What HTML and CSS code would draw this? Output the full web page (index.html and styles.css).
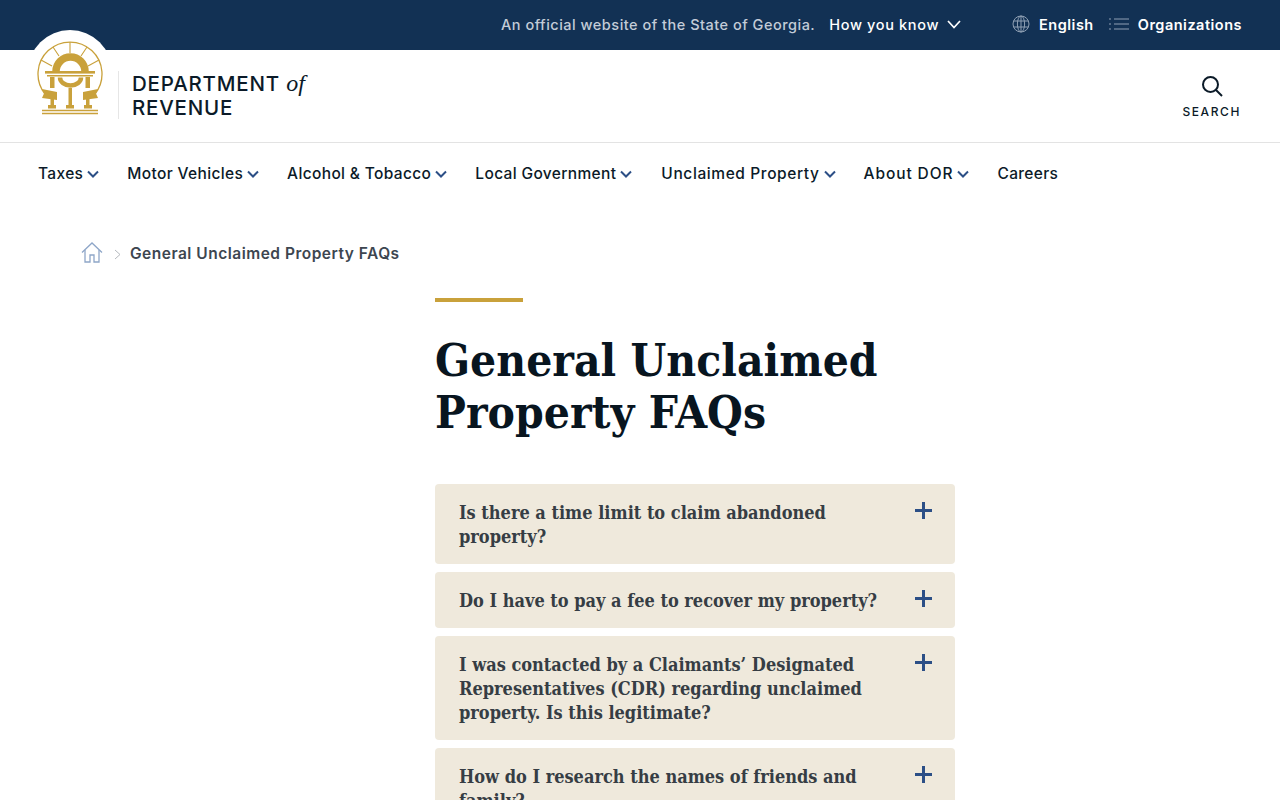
FILE: index.html
```html
<!DOCTYPE html>
<html lang="en">
<head>
  <meta charset="UTF-8">
  <meta name="viewport" content="width=device-width, initial-scale=1.0">
  <title>General Unclaimed Property FAQs</title>
  <link rel="stylesheet" href="styles.css">
</head>
<body>
  <div class="topbar">
    <span class="official">An official website of the State of Georgia.</span>
    <a class="how-you-know">How you know
      <svg width="14" height="9" viewBox="0 0 14 9"><path d="M1 1l6 6.5L13 1" fill="none" stroke="#fff" stroke-width="1.7"/></svg>
    </a>
    <a class="top-link lang">
      <svg width="18" height="18" viewBox="0 0 18 18" fill="none" stroke="#8fa0b4" stroke-width="1"><circle cx="9" cy="9" r="8"/><ellipse cx="9" cy="9" rx="3.6" ry="8"/><path d="M9 1v16M1.6 6h14.8M1.6 12h14.8"/></svg>
      English
    </a>
    <a class="top-link">
      <svg width="20" height="14" viewBox="0 0 20 14" fill="none" stroke="#8fa0b4" stroke-width="1"><path d="M5 2h15M5 7h15M5 12h15M0 2h2M0 7h2M0 12h2"/></svg>
      Organizations
    </a>
  </div>

  <header class="site-header">
    <a class="seal">
      <svg width="66" height="74" viewBox="37 41 66 74">
        <g fill="none" stroke="#c9a13b">
          <path d="M45 94A32 32 0 1 1 95 94" stroke-width="1.300"/>
          <path d="M70 42v11M53 47l6 9M87 47l-6 9M41 60l11 6M99 60l-11 6" stroke-width="1.100"/>
          <path d="M56 71.500A14.500 14.500 0 0 1 85 71.500" stroke-width="7.500"/>
          <path d="M60 77.500A10.500 8 0 0 0 81 77.500" stroke-width="4.500"/>
          <path d="M42 110.500h56M42 113.500h56" stroke-width="1.300"/>
        </g>
        <g fill="#c9a13b">
          <rect x="45" y="71" width="50" height="2.600"/>
          <rect x="47" y="75" width="46" height="1.500"/>
          <rect x="50" y="77" width="4.500" height="11"/>
          <rect x="85.500" y="77" width="4.500" height="11"/>
          <rect x="68.500" y="88" width="3.500" height="17"/>
          <rect x="50.500" y="99" width="3.500" height="6"/>
          <rect x="86" y="99" width="3.500" height="6"/>
          <rect x="48" y="105" width="8" height="3.500"/>
          <rect x="66" y="105" width="8" height="3.500"/>
          <rect x="84" y="105" width="8" height="3.500"/>
          <path d="M42 89l15 3v8l-15-2 2-4.500z"/>
          <path d="M98 89l-15 3v8l15-2-2-4.500z"/>
        </g>
      </svg>
    </a>
    <div class="agency">
      <div>DEPARTMENT <em>of</em></div>
      <div>REVENUE</div>
    </div>
    <a class="search">
      <svg width="22" height="22" viewBox="0 0 22 22" fill="none" stroke="#0b1a28" stroke-width="2"><circle cx="9.500" cy="9.500" r="7.500"/><path d="M15 15l6 6"/></svg>
      <span>SEARCH</span>
    </a>
  </header>

  <nav class="main-nav">
    <a>Taxes <svg class="chev" width="12" height="8" viewBox="0 0 12 8"><path d="M1 1.500l5 5 5-5"/></svg></a>
    <a>Motor Vehicles <svg class="chev" width="12" height="8" viewBox="0 0 12 8"><path d="M1 1.500l5 5 5-5"/></svg></a>
    <a>Alcohol &amp; Tobacco <svg class="chev" width="12" height="8" viewBox="0 0 12 8"><path d="M1 1.500l5 5 5-5"/></svg></a>
    <a>Local Government <svg class="chev" width="12" height="8" viewBox="0 0 12 8"><path d="M1 1.500l5 5 5-5"/></svg></a>
    <a class="unclaimed">Unclaimed Property <svg class="chev" width="12" height="8" viewBox="0 0 12 8"><path d="M1 1.500l5 5 5-5"/></svg></a>
    <a class="about">About DOR <svg class="chev" width="12" height="8" viewBox="0 0 12 8"><path d="M1 1.500l5 5 5-5"/></svg></a>
    <a>Careers</a>
  </nav>

  <div class="breadcrumb">
    <svg class="home" width="22" height="21" viewBox="0 0 22 21" fill="none" stroke="#8ea6c8" stroke-width="1.300"><path d="M1 10.500L11 1l10 9.500"/><path d="M4 8v12h5v-7h4v7h5V8"/></svg>
    <svg class="crumb-sep" width="7" height="11" viewBox="0 0 7 11"><path d="M1 1l5 4.500L1 10" fill="none" stroke="#b5b9be"/></svg>
    <span>General Unclaimed Property FAQs</span>
  </div>

  <main class="content">
    <div class="accent"></div>
    <h1>General Unclaimed Property FAQs</h1>

    <div class="faq">
      <div class="faq-title">Is there a time limit to claim abandoned property?</div>
      <span class="plus"></span>
    </div>
    <div class="faq">
      <div class="faq-title">Do I have to pay a fee to recover my property?</div>
      <span class="plus"></span>
    </div>
    <div class="faq">
      <div class="faq-title">I was contacted by a Claimants’ Designated Representatives (CDR) regarding unclaimed property. Is this legitimate?</div>
      <span class="plus"></span>
    </div>
    <div class="faq">
      <div class="faq-title">How do I research the names of friends and family?</div>
      <span class="plus"></span>
    </div>
  </main>
</body>
</html>
```
FILE: styles.css
```css
* {
  margin: 0;
  padding: 0;
  box-sizing: border-box;
}

body {
  font-family: Inter, 'Liberation Sans', sans-serif;
  color: #0b1a28;
  background: #fff;
  height: 800px;
  overflow: hidden;
}

.topbar {
  height: 50px;
  background: #123154;
  color: #fff;
  display: flex;
  justify-content: flex-end;
  align-items: center;
  padding: 0 38px 1px 0;
  font-size: 14.500px;
  font-weight: 500;
  letter-spacing: 0.5px;
}

.official {
  color: #c3ccd8;
  margin-right: 14px;
}

.how-you-know {
  display: flex;
  align-items: center;
  gap: 8px;
  margin-right: 51px;
  letter-spacing: 0.65px;
}

.top-link {
  display: flex;
  align-items: center;
  gap: 9px;
  font-weight: 600;
  margin-top: -1px;
}

.lang {
  margin-right: 15px;
}

.site-header {
  height: 93px;
  border-bottom: 1px solid #e3e3e3;
  display: flex;
  align-items: center;
  position: relative;
  padding: 0 38px 2px 118px;
}

.seal {
  position: absolute;
  left: 28px;
  top: -20px;
  width: 84px;
  height: 84px;
  border-radius: 50%;
  background: #fff;
  display: flex;
  justify-content: center;
  padding-top: 11px;
}

.agency {
  border-left: 1px solid #e6e6e6;
  padding-left: 13px;
  font-size: 20.500px;
  line-height: 24px;
  font-weight: 500;
  letter-spacing: 0.8px;
  height: 48px;
}

.agency em {
  font-family: 'Liberation Serif', serif;
  font-size: 24px;
  letter-spacing: 0;
}

.search {
  margin: 4px 1px 0 auto;
  display: flex;
  flex-direction: column;
  align-items: center;
  gap: 7px;
  font-size: 12px;
  letter-spacing: 1.600px;
  font-weight: 500;
}

.main-nav {
  display: flex;
  gap: 28px;
  padding: 20px 0 0 38px;
  font-size: 15.500px;
  line-height: 22px;
  font-weight: 500;
  letter-spacing: 0.350px;
}

.main-nav a {
  display: flex;
  align-items: center;
  gap: 4px;
}

.main-nav .unclaimed {
  margin-left: 1px;
  letter-spacing: 0.600px;
}

.main-nav .about {
  letter-spacing: 0.900px;
}

.chev {
  fill: none;
  stroke: #2c4f86;
  stroke-width: 2;
}

.breadcrumb {
  display: flex;
  align-items: center;
  gap: 10px;
  padding: 58px 0 0 81px;
  font-size: 15.500px;
  line-height: 22px;
  font-weight: 600;
  letter-spacing: 0.500px;
  color: #3d4650;
}

.home {
  margin-top: -4px;
}

.crumb-sep {
  margin: 0 -1px 0 1px;
}

.content {
  width: 520px;
  margin: 33px 0 0 435px;
}

.accent {
  width: 88px;
  height: 4px;
  background: #c9a13b;
}

h1 {
  font-family: 'DejaVu Serif', 'Liberation Serif', serif;
  font-stretch: condensed;
  font-size: 45.700px;
  line-height: 52px;
  font-weight: 700;
  margin: 32px 0 46px;
  color: #08151f;
}

.faq {
  background: #efe9dc;
  border-radius: 4px;
  padding: 17px 23px 15px 24px;
  margin-bottom: 8px;
  display: flex;
  justify-content: space-between;
  gap: 16px;
}

.faq-title {
  font-family: 'DejaVu Serif', 'Liberation Serif', serif;
  font-stretch: condensed;
  font-size: 18px;
  line-height: 24px;
  font-weight: 700;
  color: #363d44;
}

.plus {
  flex: none;
  width: 17px;
  height: 17px;
  margin-top: 1px;
  background:
    linear-gradient(#2c4f86, #2c4f86) center / 100% 3px no-repeat,
    linear-gradient(#2c4f86, #2c4f86) center / 3px 100% no-repeat;
}
```
